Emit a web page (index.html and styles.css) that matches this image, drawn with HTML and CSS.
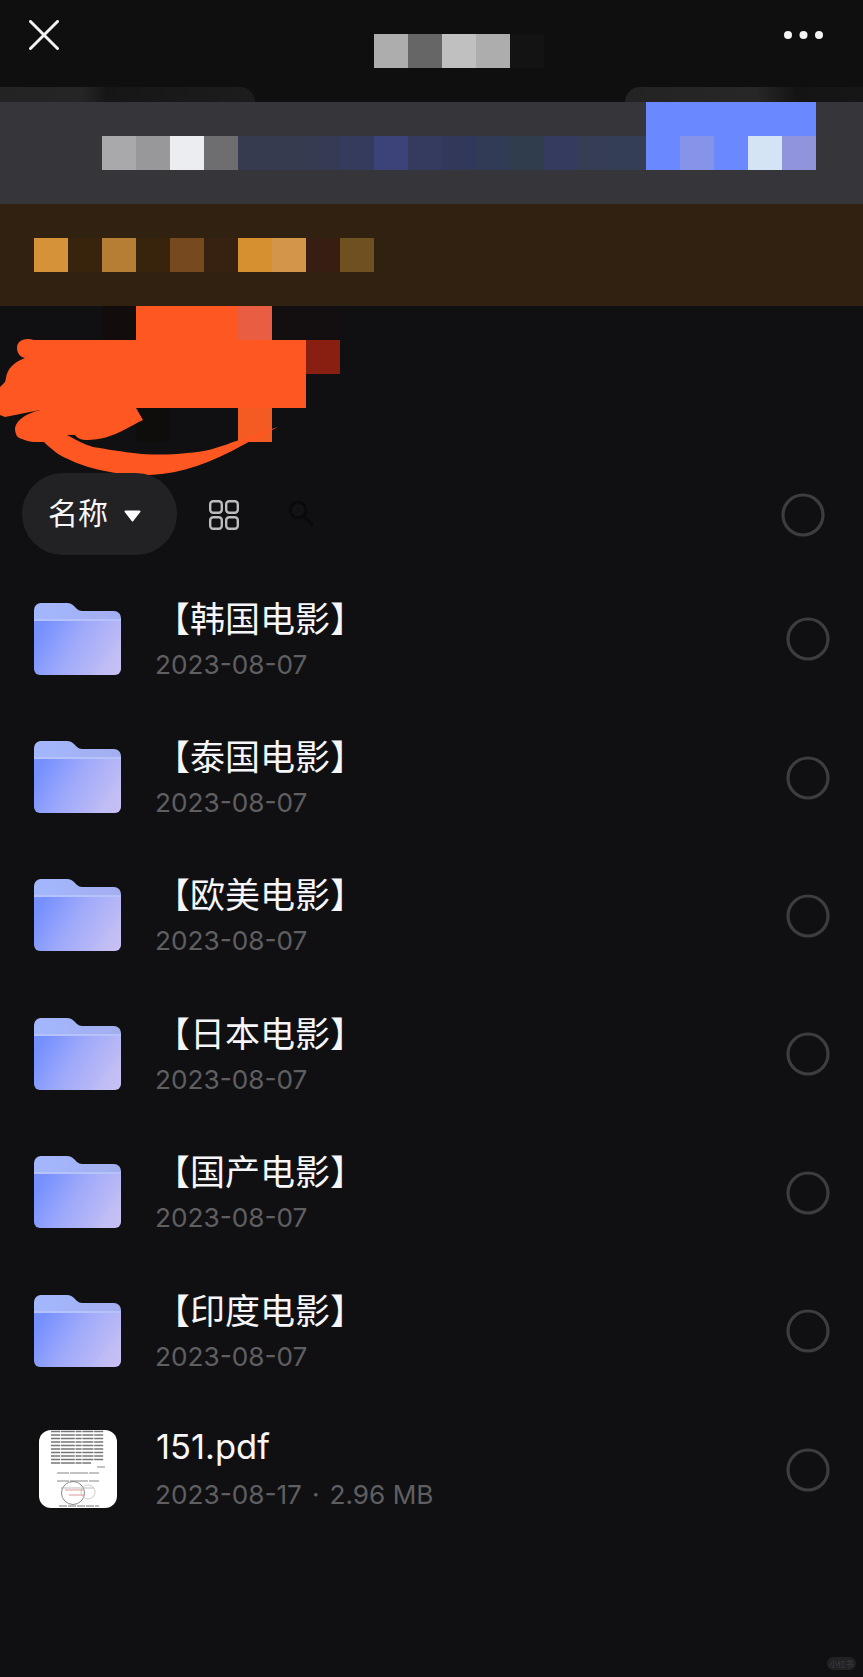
FILE: index.html
```html
<!DOCTYPE html>
<html lang="zh-CN">
<head>
<meta charset="utf-8">
<title>文件列表</title>
<link rel="stylesheet" href="styles.css">
</head>
<body>
<svg class="defs" width="0" height="0" aria-hidden="true">
  <defs>
    <linearGradient id="folderBack" x1="0" y1="0" x2="1" y2="0">
      <stop offset="0" stop-color="#a3b7ff"/>
      <stop offset="1" stop-color="#a3aeee"/>
    </linearGradient>
    <linearGradient id="folderFront" x1="0" y1="0.35" x2="1" y2="0.7">
      <stop offset="0" stop-color="#7590ff"/>
      <stop offset="0.45" stop-color="#a0aafa"/>
      <stop offset="1" stop-color="#c5bff3"/>
    </linearGradient>
    <symbol id="folder" viewBox="0 0 87 72">
      <path d="M0 7a7 7 0 0 1 7-7h26c3 0 5 1 7 3l3 3c1.500 1 3 2 5 2h32a7 7 0 0 1 7 7v20H0z" fill="url(#folderBack)"/>
      <path d="M0 18h87v48a6 6 0 0 1-6 6H6a6 6 0 0 1-6-6z" fill="url(#folderFront)"/>
      <path d="M0 17h87" stroke="#b6c3fa" stroke-width="2"/>
      <path d="M58 72 87 34v16L72 72z" fill="#fff" opacity=".04"/>
    </symbol>
    <symbol id="ring" viewBox="0 0 44 44">
      <circle cx="22" cy="22" r="20" fill="none" stroke="#3d3d3f" stroke-width="3.200"/>
    </symbol>
  </defs>
</svg>

<main class="screen">
  <header class="topbar">
    <svg class="close" viewBox="0 0 30 30" aria-label="关闭">
      <path d="M1.500 1.500 28.500 28.500M28.500 1.500 1.500 28.500" stroke="#f2f2f2" stroke-width="3" stroke-linecap="round"/>
    </svg>
    <div class="mosaic title-mosaic">
      <span class="cell t1"></span><span class="cell t2"></span><span class="cell t3"></span><span class="cell t1"></span><span class="cell t4"></span>
    </div>
    <svg class="more" viewBox="0 0 39 10" aria-label="更多">
      <circle cx="4" cy="5" r="4" fill="#f4f4f4"/>
      <circle cx="19.500" cy="5" r="4" fill="#f4f4f4"/>
      <circle cx="35" cy="5" r="4" fill="#f4f4f4"/>
    </svg>
  </header>

  <div class="strip">
    <div class="tab tab-left"></div>
    <div class="tab tab-right"></div>
  </div>

  <section class="band band-gray">
    <div class="mosaic band-row">
      <span class="cell g1"></span><span class="cell g2"></span><span class="cell g3"></span><span class="cell g4"></span>
      <span class="cell b1"></span><span class="cell b2"></span><span class="cell b3"></span><span class="cell b4"></span><span class="cell b5"></span><span class="cell b6"></span><span class="cell b7"></span><span class="cell b8"></span><span class="cell b9"></span><span class="cell b10"></span><span class="cell b11"></span><span class="cell b12"></span>
    </div>
    <div class="blue-block">
      <div class="mosaic blue-row">
        <span class="cell"></span><span class="cell u1"></span><span class="cell"></span><span class="cell u2"></span><span class="cell u3"></span>
      </div>
    </div>
  </section>

  <section class="band band-orange">
    <div class="mosaic orange-row">
      <span class="cell o1"></span><span class="cell o2"></span><span class="cell o3"></span><span class="cell o2"></span><span class="cell o4"></span><span class="cell o5"></span><span class="cell o6"></span><span class="cell o7"></span><span class="cell o8"></span><span class="cell o9"></span>
    </div>
  </section>

  <div class="scribble">
    <svg viewBox="0 306 863 167" width="863" height="167" aria-hidden="true">
      <rect x="102" y="306" width="34" height="34" fill="#120d0c"/>
      <rect x="272" y="306" width="68" height="34" fill="#130e10"/>
      <rect x="136" y="408" width="34" height="34" fill="#0e0d0b"/>
      <rect x="136" y="306" width="102" height="34" fill="#ff5722"/>
      <rect x="238" y="306" width="34" height="34" fill="#e95d42"/>
      <rect x="306" y="340" width="34" height="34" fill="#891f10"/>
      <rect x="238" y="408" width="34" height="34" fill="#f45b22"/>
      <path d="M34 340C24 337 17 341 17 348C17 353 20 357 25 358C14 362 7 369 6 378L5 382L0 387V415L5 417L40 410C26 414 17 419 15 428C15 434 17 438 22 439C30 443 38 442 44 442C52 450 60 456 68 459C88 469 120 476 150 475C182 474 212 462 243 445C256 438 268 432 278 427C262 432 248 438 233 442C218 448 204 452 187 453C168 455 150 455 133 453C116 451 100 448 93 447C86 445 76 440 67 435L75 435C78 439 82 440 87 440C100 440 112 436 122 431C130 427 136 423 143 420L136 408H306V340H34Z" fill="#ff5722"/>
    </svg>
  </div>

  <div class="toolbar">
    <button class="sort" type="button">
      <span class="sort-label">名称</span>
      <svg class="caret" viewBox="0 0 17 12"><path d="M1.500 0.500H15.500a1 1 0 0 1 .8 1.600L9.300 11a1 1 0 0 1-1.600 0L.7 2.100A1 1 0 0 1 1.500 .5z" fill="#fff"/></svg>
    </button>
    <svg class="grid-icon" viewBox="0 0 30 30" aria-label="视图">
      <g fill="none" stroke="#bcbcbc" stroke-width="2.400">
        <rect x="1.200" y="1.200" width="11.600" height="11.600" rx="3"/>
        <rect x="17.200" y="1.200" width="11.600" height="11.600" rx="3"/>
        <rect x="1.200" y="17.200" width="11.600" height="11.600" rx="3"/>
        <rect x="17.200" y="17.200" width="11.600" height="11.600" rx="3"/>
      </g>
    </svg>
    <svg class="search-icon" viewBox="0 0 26 28" aria-label="搜索">
      <circle cx="10" cy="10" r="8" fill="none" stroke="#09090a" stroke-width="2.500"/>
      <circle cx="10" cy="10" r="4" fill="none" stroke="#161617" stroke-width="1.500"/>
      <path d="M17 17 24 25" stroke="#09090a" stroke-width="2.500" stroke-linecap="round"/>
    </svg>
    <svg class="ring ring-all"><use href="#ring"/></svg>
  </div>

  <ul class="list">
    <li class="row">
      <svg class="folder"><use href="#folder"/></svg>
      <div class="info"><div class="name">【韩国电影】</div><div class="meta">2023-08-07</div></div>
      <svg class="ring"><use href="#ring"/></svg>
    </li>
    <li class="row">
      <svg class="folder"><use href="#folder"/></svg>
      <div class="info"><div class="name">【泰国电影】</div><div class="meta">2023-08-07</div></div>
      <svg class="ring"><use href="#ring"/></svg>
    </li>
    <li class="row">
      <svg class="folder"><use href="#folder"/></svg>
      <div class="info"><div class="name">【欧美电影】</div><div class="meta">2023-08-07</div></div>
      <svg class="ring"><use href="#ring"/></svg>
    </li>
    <li class="row">
      <svg class="folder"><use href="#folder"/></svg>
      <div class="info"><div class="name">【日本电影】</div><div class="meta">2023-08-07</div></div>
      <svg class="ring"><use href="#ring"/></svg>
    </li>
    <li class="row">
      <svg class="folder"><use href="#folder"/></svg>
      <div class="info"><div class="name">【国产电影】</div><div class="meta">2023-08-07</div></div>
      <svg class="ring"><use href="#ring"/></svg>
    </li>
    <li class="row">
      <svg class="folder"><use href="#folder"/></svg>
      <div class="info"><div class="name">【印度电影】</div><div class="meta">2023-08-07</div></div>
      <svg class="ring"><use href="#ring"/></svg>
    </li>
    <li class="row">
      <svg class="thumb" viewBox="0 0 78 78" aria-label="151.pdf">
        <rect width="78" height="78" rx="12" fill="#fff"/>
        <g class="thumb-ink">
          <g stroke="#777" stroke-width="1.700" stroke-dasharray="9 .8 14 .8 6 .8 11 .8">
            <path d="M12 1.500H65M12 5H65M12 8.500H65M12 12H65M12 15.500H65M12 19H65M12 22.500H65M12 26H65M12 29.500H65M12 33H52"/>
          </g>
          <path d="M58 37H66M18 43H60M18 51H60" stroke="#888" stroke-width="1.200" stroke-dasharray="12 1 18 1"/>
          <path d="M22 58H55" stroke="#bbb" stroke-width="1"/>
          <circle cx="34" cy="63" r="11.500" fill="none" stroke="#888" stroke-width="1"/>
          <circle cx="49" cy="62" r="7" fill="none" stroke="#ccc" stroke-width="1"/>
          <path d="M26 60H44M30 65H46" stroke="#d99" stroke-width="1"/>
          <path d="M20 76H60" stroke="#777" stroke-width="1.200" stroke-dasharray="8 1"/>
        </g>
      </svg>
      <div class="info"><div class="name name-file">151.pdf</div><div class="meta">2023-08-17<span class="sep">·</span>2.96 MB</div></div>
      <svg class="ring"><use href="#ring"/></svg>
    </li>
  </ul>

  <div class="watermark">小红书</div>
</main>
</body>
</html>
```

FILE: styles.css
```css
* { box-sizing: border-box; }

html, body {
  margin: 0;
  padding: 0;
  background: #101012;
}

.defs { position: absolute; }

.screen {
  position: relative;
  width: 863px;
  height: 1677px;
  overflow: hidden;
  background: #101012;
  font-family: Inter, "Noto Sans CJK SC", sans-serif;
  color: #f6f6f8;
}

/* top bar */
.topbar {
  display: flex;
  align-items: flex-start;
  height: 87px;
  background: #0f0f10;
}

.close {
  width: 30px;
  height: 30px;
  margin: 20px 0 0 29px;
  flex: none;
}

.title-mosaic { margin: 34px 0 0 315px; }

.more {
  width: 39px;
  height: 10px;
  margin: 30px 0 0 240px;
  flex: none;
}

.mosaic { display: flex; }

.cell {
  display: block;
  flex: none;
  width: 34px;
  height: 34px;
}

.t1 { background: #adadad; }
.t2 { background: #666667; }
.t3 { background: #c0c0c0; }
.t4 { background: #131314; }

.strip {
  display: flex;
  justify-content: space-between;
  height: 15px;
  background: #0f0f10;
}

.tab {
  height: 15px;
  border-radius: 16px 16px 0 0;
}

.tab-left {
  width: 255px;
  border-top-left-radius: 0;
  background: linear-gradient(90deg, #232324, #252525 32%, #161617 42%, #1c1c1d 95%);
}

.tab-right {
  width: 238px;
  border-top-right-radius: 0;
  background: linear-gradient(90deg, #232324, #272727 55%, #141415 72%, #161617);
}

/* mosaic bands */
.band {
  display: flex;
  align-items: flex-start;
  height: 102px;
}

.band-gray {
  padding-left: 102px;
  background: #36363a;
}

.band-row { margin-top: 34px; }

.g1 { background: #a9a9ab; }
.g2 { background: #98989a; }
.g3 { background: #ecedf1; }
.g4 { background: #6e6e70; }
.b1 { background: #363b50; }
.b2 { background: #363c50; }
.b3 { background: #353b52; }
.b4 { background: #353b5c; }
.b5 { background: #3c4378; }
.b6 { background: #343b5e; }
.b7 { background: #323859; }
.b8 { background: #323b55; }
.b9 { background: #303d4c; }
.b10 { background: #353b5e; }
.b11 { background: #363e56; }
.b12 { background: #343f56; }

.blue-block {
  width: 170px;
  height: 68px;
  padding-top: 34px;
  background: #6a88ff;
}

.u1 { background: #8593e8; }
.u2 { background: #d5e4f5; }
.u3 { background: #8f94dc; }

.band-orange {
  padding: 34px 0 0 34px;
  background: #302110;
}

.o1 { background: #d69239; }
.o2 { background: #38230c; }
.o3 { background: #b67d35; }
.o4 { background: #764a1e; }
.o5 { background: #372212; }
.o6 { background: #d6902f; }
.o7 { background: #d2954a; }
.o8 { background: #381e12; }
.o9 { background: #6e5021; }

.scribble {
  height: 167px;
}

.scribble svg {
  display: block;
  overflow: visible;
}

/* toolbar */
.toolbar {
  display: flex;
  align-items: center;
  height: 82px;
  padding-left: 22px;
}

.sort {
  display: flex;
  align-items: center;
  gap: 16px;
  width: 155px;
  height: 82px;
  padding: 0 0 0 26px;
  border: 0;
  border-radius: 41px;
  background: #222225;
  color: #f6f6f8;
  font: 30px/40px "Noto Sans CJK SC", sans-serif;
}

.sort-label { margin-bottom: 6px; }

.caret {
  width: 17px;
  height: 12px;
  flex: none;
  margin-top: 3px;
}

.grid-icon {
  width: 30px;
  height: 30px;
  margin: 2px 0 0 32px;
  flex: none;
}

.search-icon {
  width: 26px;
  height: 28px;
  margin: 0 0 0 49px;
  flex: none;
}

.ring {
  width: 44px;
  height: 44px;
  flex: none;
  margin-left: auto;
}

.ring-all {
  margin-top: 1px;
  margin-right: 38px;
}

/* list */
.list {
  list-style: none;
  margin: 15px 0 0;
  padding: 0;
}

.row {
  display: flex;
  align-items: center;
  height: 138.4px;
  padding: 0 33px 0 34px;
}

.folder {
  width: 87px;
  height: 72px;
  flex: none;
  margin-bottom: 1px;
}

.thumb {
  width: 78px;
  height: 78px;
  flex: none;
  margin: 0 4px 1px 5px;
}

.thumb-ink { filter: blur(.6px); }

.info {
  display: flex;
  flex-direction: column;
  margin: 0 0 3px 34px;
}

.name {
  font: 35px/46px "Noto Sans CJK SC", sans-serif;
  color: #f6f6f8;
}

.name-file {
  font-family: Inter, "Noto Sans CJK SC", sans-serif;
  font-size: 34.500px;
  margin-left: 1px;
}

.meta {
  margin-top: 8px;
  font: 26.200px/34px Inter, "Noto Sans CJK SC", sans-serif;
  color: #5f5f62;
  white-space: pre;
}

.sep { margin: 0 10px; }

.watermark {
  position: absolute;
  right: 7px;
  bottom: 7px;
  width: 29px;
  height: 13px;
  border-radius: 7px;
  background: #222224;
  color: #3f3f41;
  font: 8px/13px "Noto Sans CJK SC", sans-serif;
  text-align: center;
}
```
